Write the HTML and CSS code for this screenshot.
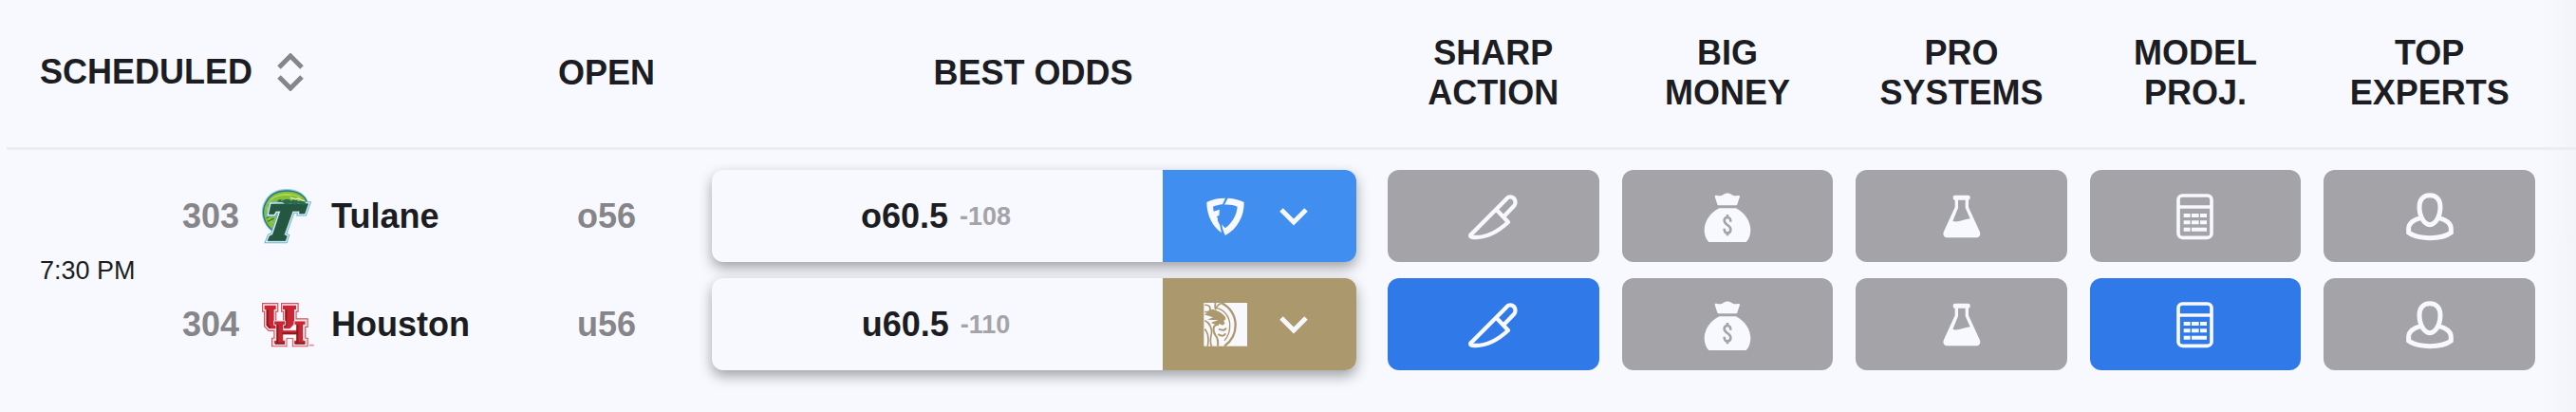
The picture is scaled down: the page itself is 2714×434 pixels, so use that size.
FILE: index.html
```
<!doctype html>
<html lang="en">
<head>
<meta charset="utf-8">
<title>Public betting - totals</title>
<meta name="viewport" content="width=device-width, initial-scale=1">
<link rel="stylesheet" href="styles.css">
</head>

<body>
<!-- icon set -->
<svg class="sprite" aria-hidden="true">
	<symbol id="i-knife" viewBox="41 95 180 180">
		<g fill="none" stroke="#f7f9fe" stroke-width="13" stroke-linejoin="round" stroke-linecap="round">
			<path d="M61 243 L173 130 C180 121 190 122 197 128 C203 135 203 145 197 152 L166 184"/>
			<path d="M61 243 C57 249 62 251 74 251 C115 252 152 228 179 203 L145 167"/>
		</g>
	</symbol>
	<symbol id="i-bag" viewBox="46 95 180 180">
		<g fill="#f7f9fe">
			<path d="M96 122 C96 118 99 118 104 119 C112 121 118 119 123 116 C131 110 141 110 149 116 C154 119 160 121 168 119 C173 118 175 119 175 123 L167 147 Q166 150 163 150 L108 150 Q105 150 104 147 Z"/>
			<path d="M110 159 H163 C190 173 209 200 209 228 C209 244 204 258 195 266 H77 C68 258 63 244 63 228 C63 200 82 173 110 159 Z"/>
		</g>
		<path d="M146 202 C146 192 142 188 136 188 C130 188 126 192 126 198 C126 213 146 211 146 226 C146 233 142 237 136 237 C130 237 126 233 126 223 M136 179 V187 M136 238 V246" fill="none" stroke="#a4a3a8" stroke-width="8"/>
	</symbol>
	<symbol id="i-flask" viewBox="50 95 180 180">
		<g fill="#f7f9fe">
			<rect x="112" y="118" width="54" height="15" rx="6"/>
			<path d="M118 130 H128 V158 L111 200 C128 205 146 194 166 192 L151 158 V130 H161 V156 L196 232 C201 243 195 252 184 252 H95 C84 252 78 243 83 232 L118 156 Z"/>
		</g>
	</symbol>
	<symbol id="i-calc" viewBox="40 95 180 180">
		<g fill="none" stroke="#f7f9fe" stroke-width="11">
			<rect x="76" y="119" width="105" height="133" rx="13"/>
			<path d="M76 155 H181"/>
		</g>
		<g fill="#f7f9fe">
			<path d="M93 176h21v12h-21z M118 176h23v12h-23z M145 176h21v12h-21z M93 198h21v12h-21z M118 198h23v12h-23z M145 198h21v12h-21z M93 220h21v12h-21z M118 220h48v12h-48z"/>
		</g>
	</symbol>
	<symbol id="i-expert" viewBox="60 95 180 180">
		<g fill="none" stroke="#f7f9fe" stroke-width="15">
			<path d="M150 118 C172 118 183 133 183 155 C183 185 168 211 150 211 C132 211 117 185 117 155 C117 133 128 118 150 118 Z"/>
			<path d="M121 190 C98 195 83 208 83 223 V236 C100 249 125 253 150 253 C175 253 200 249 217 236 V223 C217 208 202 195 179 190"/>
		</g>
	</symbol>
	<symbol id="i-sort" viewBox="0 0 28 40">
		<path d="M2 15 L14 3 L26 15 M2 25 L14 37 L26 25" fill="none" stroke="#86858a" stroke-width="5"/>
	</symbol>
	<symbol id="i-down" viewBox="0 0 30 20">
		<path d="M2 3 L15 16 L28 3" fill="none" stroke="#f7f9fe" stroke-width="5"/>
	</symbol>
</svg>

<table class="odds-table">
	<colgroup>
		<col class="col-time">
		<col class="col-team">
		<col class="col-open">
		<col class="col-best">
		<col><col><col><col><col>
		<col class="col-end">
	</colgroup>
	<thead>
		<tr>
			<th class="scheduled" colspan="2"><button class="sort" type="button">SCHEDULED <svg class="sort-icon" aria-hidden="true"><use href="#i-sort"/></svg></button></th>
			<th>OPEN</th>
			<th>BEST ODDS</th>
			<th>SHARP<br>ACTION</th>
			<th>BIG<br>MONEY</th>
			<th>PRO<br>SYSTEMS</th>
			<th>MODEL<br>PROJ.</th>
			<th>TOP<br>EXPERTS</th>
			<td></td>
		</tr>
	</thead>
	<tbody>
		<tr>
			<td class="time" rowspan="2">7:30 PM</td>
			<td>
				<div class="team">
					<span class="rotation">303</span>
					<svg class="team-logo" viewBox="40 52 180 180" role="img" aria-label="Tulane logo">
						<path d="M80 188 C50 166 40 128 56 97 C70 68 98 58 125 58 C158 58 184 74 190 100 L110 150 Z" fill="#7dbb38" stroke="#8fcbe6" stroke-width="6"/>
						<path d="M80 186 C51 164 43 128 58 99 C72 70 98 61 125 61 C158 61 182 76 188 98 L110 140 Z" fill="#84c03c" stroke="#2d7480" stroke-width="4"/>
						<path d="M66 100 C78 78 110 70 140 76 M64 112 C60 130 66 150 78 162 M74 88 C100 66 150 68 168 84" fill="none" stroke="#b5dc55" stroke-width="3"/>
						<path d="M60 148 L70 142 M64 158 L84 148" stroke="#35723f" stroke-width="4"/>
						<g stroke-linejoin="miter">
							<path d="M75 103 L192 102 L181 133 L164 133 L166 125 L143 125 L116 200 L125 204 L120 219 L64 219 L70 204 L80 200 L105 125 L90 125 L84 135 L68 135 Z" fill="#67b4dd" stroke="#67b4dd" stroke-width="15"/>
							<path d="M75 103 L192 102 L181 133 L164 133 L166 125 L143 125 L116 200 L125 204 L120 219 L64 219 L70 204 L80 200 L105 125 L90 125 L84 135 L68 135 Z" fill="#fff" stroke="#eef6fa" stroke-width="9"/>
							<path d="M75 103 L192 102 L181 133 L164 133 L166 125 L143 125 L116 200 L125 204 L120 219 L64 219 L70 204 L80 200 L105 125 L90 125 L84 135 L68 135 Z" fill="#24573f" stroke="#24573f" stroke-width="2"/>
						</g>
						<path d="M92 95 C98 88 106 86 114 89 C108 88 104 90 108 94 C120 84 134 86 138 93 C146 86 156 86 160 95 C168 90 180 93 186 102 L176 106 L162 101 L150 106 L136 101 L122 105 L112 98 Z" fill="#2b6a4c"/>
						<path d="M136 84 C146 82 150 92 158 86 C166 84 170 94 180 92" fill="none" stroke="#e5f0b0" stroke-width="4"/>
					</svg>
					<span class="name">Tulane</span>
				</div>
			</td>
			<td class="open">o56</td>
			<td class="best">
				<div class="offer">
					<button class="price" type="button">o60.5 <span class="juice">-108</span></button>
					<button class="book book-fanduel" type="button" aria-label="FanDuel, more books">
						<svg class="book-logo" viewBox="171 100 144 144" aria-hidden="true">
							<g fill="#f7f9fe">
								<path d="M184 127 C200 118 219 114 243 114 L234 134 C223 135 213 138 204 141 L206 156 L225 150 L223 169 L215 173 L219 177 C217 188 224 192 226 201 L231 224 C205 206 184 172 184 127 Z"/>
								<path d="M251 114 C271 115 289 120 302 127 C303 171 281 211 243 232 C237 221 233 210 232 197 L242 209 C265 192 279 167 281 141 C270 136 256 134 240 135 Z"/>
							</g>
						</svg>
						<svg class="chevron" aria-hidden="true"><use href="#i-down"/></svg>
					</button>
				</div>
			</td>
			<td class="signal"><button class="tile" type="button" aria-label="Sharp action"><svg class="icon"><use href="#i-knife"/></svg></button></td>
			<td class="signal"><button class="tile" type="button" aria-label="Big money"><svg class="icon"><use href="#i-bag"/></svg></button></td>
			<td class="signal"><button class="tile" type="button" aria-label="Pro systems"><svg class="icon"><use href="#i-flask"/></svg></button></td>
			<td class="signal"><button class="tile" type="button" aria-label="Model projections"><svg class="icon"><use href="#i-calc"/></svg></button></td>
			<td class="signal"><button class="tile" type="button" aria-label="Top experts"><svg class="icon"><use href="#i-expert"/></svg></button></td>
			<td></td>
		</tr>
		<tr>
			<td>
				<div class="team">
					<span class="rotation">304</span>
					<svg class="team-logo" viewBox="40 395 180 180" role="img" aria-label="Houston logo">
						<g stroke-linejoin="miter">
							<path d="M54 424 H90 V437 H84 V484 L90 490 H112 L120 484 V437 H114 V424 H154 V437 H148 V473 H184 V486 H177 V534 H184 V547 H84 V534 H91 V498 H70 L60 488 V437 H54 Z" fill="#d83a4b" stroke="#d5525f" stroke-width="16"/>
							<path d="M54 424 H90 V437 H84 V484 L90 490 H112 L120 484 V437 H114 V424 H154 V437 H148 V473 H184 V486 H177 V534 H184 V547 H84 V534 H91 V498 H70 L60 488 V437 H54 Z" fill="#fff" stroke="#fbe9ec" stroke-width="9"/>
							<path d="M54 424 H90 V437 H84 V484 L92 492 H116 L120 484 V437 H112 V424 H154 V437 H148 V482 L134 498 H70 L60 488 V437 H54 Z" fill="#cb2534"/>
							<path d="M63 437 V486 L72 495 M122 437 V486 L110 495" fill="none" stroke="#7f1b1c" stroke-width="6"/>
							<path d="M84 473 H120 V486 H114 V502 H154 V486 H148 V473 H184 V486 H177 V534 H184 V547 H147 V534 H154 V516 H114 V534 H120 V547 H84 V534 H91 V486 H84 Z" fill="#c62735" stroke="#f6dfe2" stroke-width="3"/>
							<path d="M95 486 V542 M158 486 V542 M110 513 H158 M88 544 H118 M150 544 H182" fill="none" stroke="#8b1c1e" stroke-width="6"/>
							<path d="M124 530 H143 V556 H124 Z" fill="#f7f9fe"/>
							<path d="M122 528 H146 M124 530 V555 M143 530 V555" fill="none" stroke="#d5525f" stroke-width="3"/>
						</g>
						<path d="M196 550 H210" stroke="#e08d95" stroke-width="5"/>
					</svg>
					<span class="name">Houston</span>
				</div>
			</td>
			<td class="open">u56</td>
			<td class="best">
				<div class="offer">
					<button class="price" type="button">u60.5 <span class="juice">-110</span></button>
					<button class="book book-mgm" type="button" aria-label="BetMGM, more books">
						<svg class="book-logo" viewBox="171 444 144 144" aria-hidden="true">
							<rect x="175" y="447" width="137" height="137" fill="#f7f9fe"/>
							<g fill="none" stroke="#ab986c">
								<path d="M229 447 C258 460 274 486 275 514 C276 544 262 568 240 584" stroke-width="7"/>
								<path d="M211 447 C212 454 208 458 212 466 C216 460 216 454 228 449 M178 454 C190 452 198 460 194 472 M178 475 C188 480 196 470 208 470" stroke-width="5"/>
								<path d="M216 464 C238 468 256 490 257 514 C258 536 250 556 240 566" stroke-width="4"/>
								<path d="M178 503 C194 510 203 530 198 550 C196 562 193 574 200 584 M178 530 C190 542 190 566 187 584" stroke-width="5"/>
								<path d="M222 516 C202 514 202 536 212 550 C222 562 220 574 219 584" stroke-width="6"/>
								<path d="M244 526 C246 532 236 536 222 530 M243 544 C240 554 228 552 220 546" stroke-width="6"/>
							</g>
							<path d="M176 484 C190 476 204 468 214 471 C226 476 236 482 243 492 L244 500 C238 500 236 506 242 512 L234 518 C226 514 218 510 212 516 L198 510 C206 506 214 506 220 502 L186 500 L204 493 Z" fill="#ab986c"/>
						</svg>
						<svg class="chevron" aria-hidden="true"><use href="#i-down"/></svg>
					</button>
				</div>
			</td>
			<td class="signal"><button class="tile active" type="button" aria-label="Sharp action"><svg class="icon"><use href="#i-knife"/></svg></button></td>
			<td class="signal"><button class="tile" type="button" aria-label="Big money"><svg class="icon"><use href="#i-bag"/></svg></button></td>
			<td class="signal"><button class="tile" type="button" aria-label="Pro systems"><svg class="icon"><use href="#i-flask"/></svg></button></td>
			<td class="signal"><button class="tile active" type="button" aria-label="Model projections"><svg class="icon"><use href="#i-calc"/></svg></button></td>
			<td class="signal"><button class="tile" type="button" aria-label="Top experts"><svg class="icon"><use href="#i-expert"/></svg></button></td>
			<td></td>
		</tr>
	</tbody>
</table>
</body>
</html>
```
FILE: styles.css
```
*{ margin: 0; padding: 0; box-sizing: border-box;}
html{ min-height: 100%; background: #f7f9fe linear-gradient(to left, #f2f4f9, #f7f9fe) no-repeat right top / 36px 100%;}
body{ padding-left: 7px; font: bold 36px/42px "Liberation Sans", Arial, sans-serif; color: #1c1d22;}
button{ font: inherit; color: inherit; border: 0; background: none; cursor: pointer;}
svg{ display: block; flex: none;}
.sprite{ position: absolute; width: 0; height: 0;}

.odds-table{ width: 100%; table-layout: fixed; border-collapse: separate; border-spacing: 0;}
.col-time{ width: 185px;}
.col-team{ width: 359px;}
.col-open{ width: 176px;}
.col-best{ width: 723px;}
.col-end{ width: 31px;}

/* header */
thead th, thead td{ height: 158px; padding-bottom: 2px; border-bottom: 3px solid #ecedf2; text-align: center; vertical-align: middle;}
thead .scheduled{ padding-left: 35px; padding-bottom: 4px; text-align: left;}
.sort{ display: flex; align-items: center; gap: 26px;}
.sort-icon{ width: 28px; height: 40px;}

/* one row per side of the game */
tbody td{ padding-top: 17px; padding-bottom: 0; vertical-align: middle;}
tbody tr:first-child td{ padding-top: 21px;}
tbody tr:last-child td, tbody .time{ padding-bottom: 40px;}
tbody .time{ padding-left: 35px; font-size: 27px; font-weight: normal;}
.team{ display: flex; align-items: center;}
.rotation{ color: #86858a;}
.team-logo{ width: 60px; height: 60px; margin: 0 15px 0 22px;}
.open{ color: #86858a; text-align: center;}

/* best odds */
tbody .best{ padding-left: 23px; padding-right: 21px;}
.offer{ display: flex; height: 97px; border-radius: 12px; background: #f7f9fe; box-shadow: 0 6px 14px rgba(28,29,34,.4);}
.price{ flex: 1; display: flex; align-items: center; justify-content: center; gap: 12px; padding-right: 3px;}
.juice{ font-size: 27px; color: #a4a3a8;}
.book{ width: 204px; display: flex; align-items: center; gap: 33px; padding-left: 42px; border-radius: 0 12px 12px 0;}
.book-fanduel{ background: #3f8ef0;}
.book-mgm{ background: #ab986c;}
.book-logo{ width: 48px; height: 48px;}
.chevron{ width: 30px; height: 20px;}

/* signals */
tbody .signal{ padding-left: 12px; padding-right: 12px;}
.tile{ display: flex; align-items: center; justify-content: center; width: 100%; height: 97px; border-radius: 12px; background: #a4a3a8;}
.tile.active{ background: #2f7ae8;}
.icon{ width: 60px; height: 60px;}
```
